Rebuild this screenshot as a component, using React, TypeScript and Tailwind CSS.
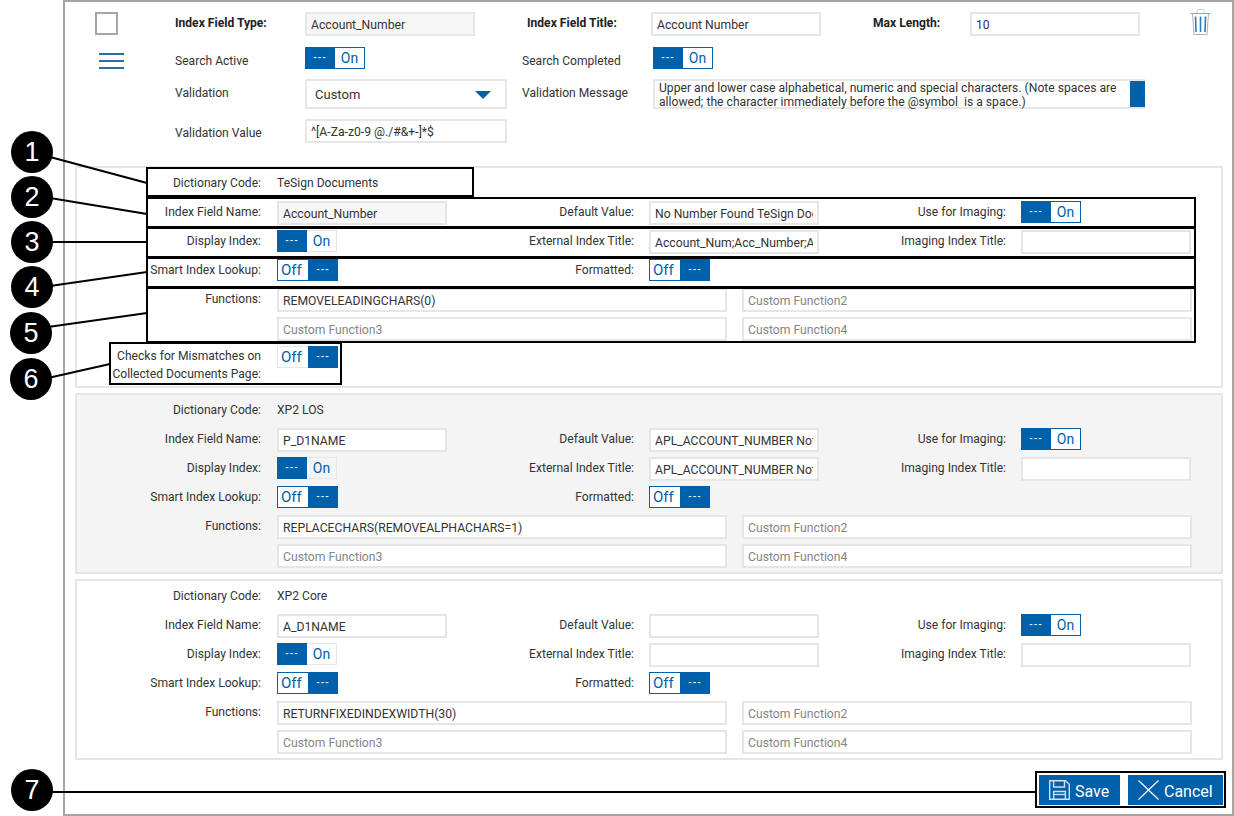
const blue = "bg-[#0060a9]";

function Field({
  value = "",
  placeholder,
  width = "w-[170px]",
  disabled = false,
}: {
  value?: string;
  placeholder?: string;
  width?: string;
  disabled?: boolean;
}) {
  return (
    <input
      readOnly
      value={value}
      placeholder={placeholder}
      className={`${width} h-[24px] shrink-0 border-2 border-[#e6e6e6] px-[4px] pt-[2px] text-[12.2px] text-[#333333] outline-none placeholder:text-[#858585] ${
        disabled ? "bg-[#f7f7f7]" : "bg-white"
      }`}
    />
  );
}

function Toggle({ on, muted = false }: { on: boolean; muted?: boolean }) {
  const dots = (
    <span className={`flex h-full w-[30px] items-center justify-center ${blue} text-[9px] font-bold tracking-[1px] text-white`}>
      ---
    </span>
  );
  const border = muted ? "border-[#e6e6e6]" : "border-[#0060a9] bg-white";
  return (
    <div className={`flex h-[22px] shrink-0 text-[#0060a9] ${on ? "w-[60px] text-[14px]" : "w-[61px] text-[15px]"}`}>
      {on && dots}
      <span className={`flex h-full flex-1 items-center border ${border} ${on ? "justify-center border-l-0" : "border-r-0 pl-[3px]"}`}>
        {on ? "On" : "Off"}
      </span>
      {!on && dots}
    </div>
  );
}

function Label({ children, width }: { children: React.ReactNode; width: string }) {
  return <div className={`${width} h-[22px] shrink-0 text-right leading-[23px] text-[#333333]`}>{children}</div>;
}

type PanelData = {
  code: string;
  name: string;
  nameDisabled?: boolean;
  defaultValue: string;
  externalTitle: string;
  fn: string;
  shaded?: boolean;
  checks?: boolean;
};

function Panel({ data }: { data: PanelData }) {
  return (
    <div className={`border-2 border-[#e6e6e6] pt-[2px] pb-[4px] ${data.shaded ? "bg-[#f4f4f4]" : "bg-white"}`}>
      <div className="flex h-[24px] items-center gap-[16px] pt-[3px]">
        <div className="w-[184px] text-right text-[#333333]">Dictionary Code:</div>
        <div className="text-[#333333]">{data.code}</div>
      </div>
      <div className="mt-[7px] flex">
        <Label width="w-[184px] mr-[16px]">Index Field Name:</Label>
        <Field value={data.name} disabled={data.nameDisabled} />
        <Label width="w-[187px] mr-[15px]">Default Value:</Label>
        <Field value={data.defaultValue} />
        <Label width="w-[187px] mr-[15px]">Use for Imaging:</Label>
        <Toggle on />
      </div>
      <div className="mt-[5px] flex">
        <Label width="w-[184px] mr-[16px]">Display Index:</Label>
        <div className="w-[170px] shrink-0">
          <Toggle on muted />
        </div>
        <Label width="w-[187px] mr-[15px]">External Index Title:</Label>
        <Field value={data.externalTitle} />
        <Label width="w-[187px] mr-[15px]">Imaging Index Title:</Label>
        <Field />
      </div>
      <div className="mt-[5px] flex">
        <Label width="w-[184px] mr-[16px]">Smart Index Lookup:</Label>
        <div className="w-[170px] shrink-0">
          <Toggle on={false} />
        </div>
        <Label width="w-[187px] mr-[15px]">Formatted:</Label>
        <Toggle on={false} />
      </div>
      <div className="mt-[7px] flex">
        <Label width="w-[184px] mr-[16px]">Functions:</Label>
        <div className="grid grid-cols-[450px_450px] gap-x-[15px] gap-y-[5px]">
          <Field value={data.fn} width="w-[450px]" />
          <Field placeholder="Custom Function2" width="w-[450px]" />
          <Field placeholder="Custom Function3" width="w-[450px]" />
          <Field placeholder="Custom Function4" width="w-[450px]" />
        </div>
      </div>
      {data.checks && (
        <div className="mt-[5px] flex h-[36px]">
          <div className="mr-[16px] w-[184px] shrink-0 pt-[1px] text-right leading-[18px] text-[#333333]">
            Checks for Mismatches on
            <br />
            Collected Documents Page:
          </div>
          <Toggle on={false} muted />
        </div>
      )}
    </div>
  );
}

function TrashIcon() {
  return (
    <svg width="21" height="27" viewBox="0 0 21 27" fill="none" className="mt-[-3px] ml-[50px] shrink-0">
      <path d="M7 4V1.5C7 .8 7.5.5 8 .5H13C13.5.5 14 .8 14 1.5V4" stroke="#c5ccd6" />
      <path d="M.5 4.5H20.5" stroke="#8ea3bd" />
      <path d="M2.5 4.5L4 25.5H17L18.5 4.5" stroke="#a9b4c6" />
      <path d="M5.5 7.5L6 23M10.5 7.5V23M15.5 7.5L15 23" stroke="#2c7cb8" strokeWidth="1.6" />
    </svg>
  );
}

function SaveIcon() {
  return (
    <svg width="21" height="20" viewBox="0 0 21 20" fill="none" stroke="#cfe0ee" strokeWidth="1.4">
      <path d="M.7.7H16.5L20.3 4.2V19.3H.7Z" />
      <path d="M4.6.7V7H15.5V.7" />
      <path d="M4.6 19.3V11.5H16.4V19.3" />
      <path d="M4.6 14.5H16.4" />
    </svg>
  );
}

function CancelIcon() {
  return (
    <svg width="21" height="20" viewBox="0 0 21 20" fill="none" stroke="#ffffff" strokeWidth="1.2">
      <path d="M.5.5L20.5 19.5M20.5.5L.5 19.5" />
    </svg>
  );
}

const panels: PanelData[] = [
  {
    code: "TeSign Documents",
    name: "Account_Number",
    nameDisabled: true,
    defaultValue: "No Number Found TeSign Documents",
    externalTitle: "Account_Num;Acc_Number;Account",
    fn: "REMOVELEADINGCHARS(0)",
    checks: true,
  },
  {
    code: "XP2 LOS",
    name: "P_D1NAME",
    defaultValue: "APL_ACCOUNT_NUMBER Not Found",
    externalTitle: "APL_ACCOUNT_NUMBER Not Found",
    fn: "REPLACECHARS(REMOVEALPHACHARS=1)",
    shaded: true,
  },
  {
    code: "XP2 Core",
    name: "A_D1NAME",
    defaultValue: "",
    externalTitle: "",
    fn: "RETURNFIXEDINDEXWIDTH(30)",
  },
];

const circles = [
  { n: 1, cls: "top-[131px] left-[11px]" },
  { n: 2, cls: "top-[176px] left-[11px]" },
  { n: 3, cls: "top-[221px] left-[11px]" },
  { n: 4, cls: "top-[266px] left-[11px]" },
  { n: 5, cls: "top-[312px] left-[10px]" },
  { n: 6, cls: "top-[358px] left-[10px]" },
  { n: 7, cls: "top-[769px] left-[11px]" },
];

const boxes = [
  "top-[167px] left-[146px] w-[328px] h-[30px]",
  "top-[197px] left-[146px] w-[1050px] h-[31px]",
  "top-[227px] left-[146px] w-[1050px] h-[31px]",
  "top-[257px] left-[146px] w-[1050px] h-[31px]",
  "top-[287px] left-[146px] w-[1050px] h-[56px]",
  "top-[342px] left-[109px] w-[233px] h-[43px]",
  "top-[771px] left-[1035px] w-[191px] h-[37px]",
];

export default function App() {
  return (
    <div className="relative h-[816px] w-[1234px] overflow-hidden bg-white font-['Roboto',sans-serif] text-[12.1px]">
      <div className="ml-[63px] h-[816px] w-[1171px] border-2 border-[#a6a6a6] bg-white">
        <div className="h-[164px] pt-[10px] pl-[30px]">
          <div className="flex h-[24px]">
            <div className="w-[80px] shrink-0">
              <div className="h-[23px] w-[23px] border-2 border-[#a6a6a6]" />
            </div>
            <div className="w-[130px] shrink-0 leading-[22px] font-bold text-[#222222]">Index Field Type:</div>
            <Field value="Account_Number" disabled />
            <div className="ml-[52px] w-[124px] shrink-0 leading-[22px] font-bold text-[#222222]">Index Field Title:</div>
            <Field value="Account Number" />
            <div className="ml-[52px] w-[97px] shrink-0 leading-[22px] font-bold text-[#222222]">Max Length:</div>
            <Field value="10" />
            <TrashIcon />
          </div>
          <div className="mt-[11px] flex h-[22px]">
            <div className="w-[80px] shrink-0 pt-[6px] pl-[4px]">
              <div className="flex w-[25px] flex-col gap-[5px]">
                <div className="h-[2px] bg-[#2e6aa8]" />
                <div className="h-[2px] bg-[#2e6aa8]" />
                <div className="h-[2px] bg-[#2e6aa8]" />
              </div>
            </div>
            <div className="w-[130px] shrink-0 leading-[28px] text-[#333333]">Search Active</div>
            <Toggle on />
            <div className="ml-[157px] w-[131px] shrink-0 leading-[28px] text-[#333333]">Search Completed</div>
            <Toggle on />
          </div>
          <div className="mt-[10px] flex h-[30px] pl-[80px]">
            <div className="w-[130px] shrink-0 leading-[28px] text-[#333333]">Validation</div>
            <div className="flex h-[30px] w-[202px] shrink-0 items-center justify-between border-2 border-[#e6e6e6] pt-[2px] pr-[14px] pl-[8px] text-[13px] text-[#333333]">
              Custom
              <div className="h-0 w-0 border-x-[8px] border-t-[8px] border-x-transparent border-t-[#0060a9]" />
            </div>
            <div className="ml-[15px] w-[131px] shrink-0 leading-[28px] text-[#333333]">Validation Message</div>
            <div className="flex h-[30px] w-[492px] shrink-0 border-2 border-r-0 border-[#e6e6e6] bg-white">
              <div className="flex-1 pl-[4px] text-[12.15px] leading-[14px] text-[#333333]">
                Upper and lower case alphabetical, numeric and special characters. (Note spaces are allowed; the character immediately before the @symbol&nbsp; is a space.)
              </div>
              <div className={`w-[15px] shrink-0 ${blue}`} />
            </div>
          </div>
          <div className="mt-[10px] flex h-[24px] pl-[80px]">
            <div className="w-[130px] shrink-0 leading-[28px] text-[#333333]">Validation Value</div>
            <Field value="^[A-Za-z0-9 @./#&+-]*$" width="w-[202px]" />
          </div>
        </div>

        <div className="flex flex-col gap-[5px] pr-[9px] pl-[10px]">
          {panels.map((p) => (
            <Panel key={p.code} data={p} />
          ))}
        </div>

        <div className="mt-[15px] flex justify-end gap-[8px] pr-[9px] text-[16px] text-white">
          <button className={`flex h-[30px] w-[81px] items-center gap-[5px] pl-[10px] ${blue}`}>
            <SaveIcon />
            <span className="pt-[4px]">Save</span>
          </button>
          <button className={`flex h-[30px] w-[95px] items-center gap-[5px] pl-[10px] ${blue}`}>
            <CancelIcon />
            <span className="pt-[4px]">Cancel</span>
          </button>
        </div>
      </div>

      {/* callouts drawn over the form */}
      <svg width="1234" height="816" className="pointer-events-none absolute top-0 left-0" stroke="#000000" strokeWidth="2">
        <line x1="50" y1="157" x2="147" y2="183" />
        <line x1="50" y1="198" x2="147" y2="214" />
        <line x1="50" y1="242" x2="147" y2="242" />
        <line x1="50" y1="286" x2="147" y2="272" />
        <line x1="48" y1="327" x2="147" y2="313" />
        <line x1="48" y1="378" x2="110" y2="364" />
        <line x1="50" y1="792" x2="1036" y2="792" />
      </svg>
      {boxes.map((b) => (
        <div key={b} className={`pointer-events-none absolute border-[2px] border-black ${b}`} />
      ))}
      {circles.map((c) => (
        <div
          key={c.n}
          className={`absolute flex h-[42px] w-[42px] items-center justify-center rounded-full bg-black font-['Liberation_Sans',sans-serif] text-[27px] text-white ${c.cls}`}
        >
          {c.n}
        </div>
      ))}
    </div>
  );
}
